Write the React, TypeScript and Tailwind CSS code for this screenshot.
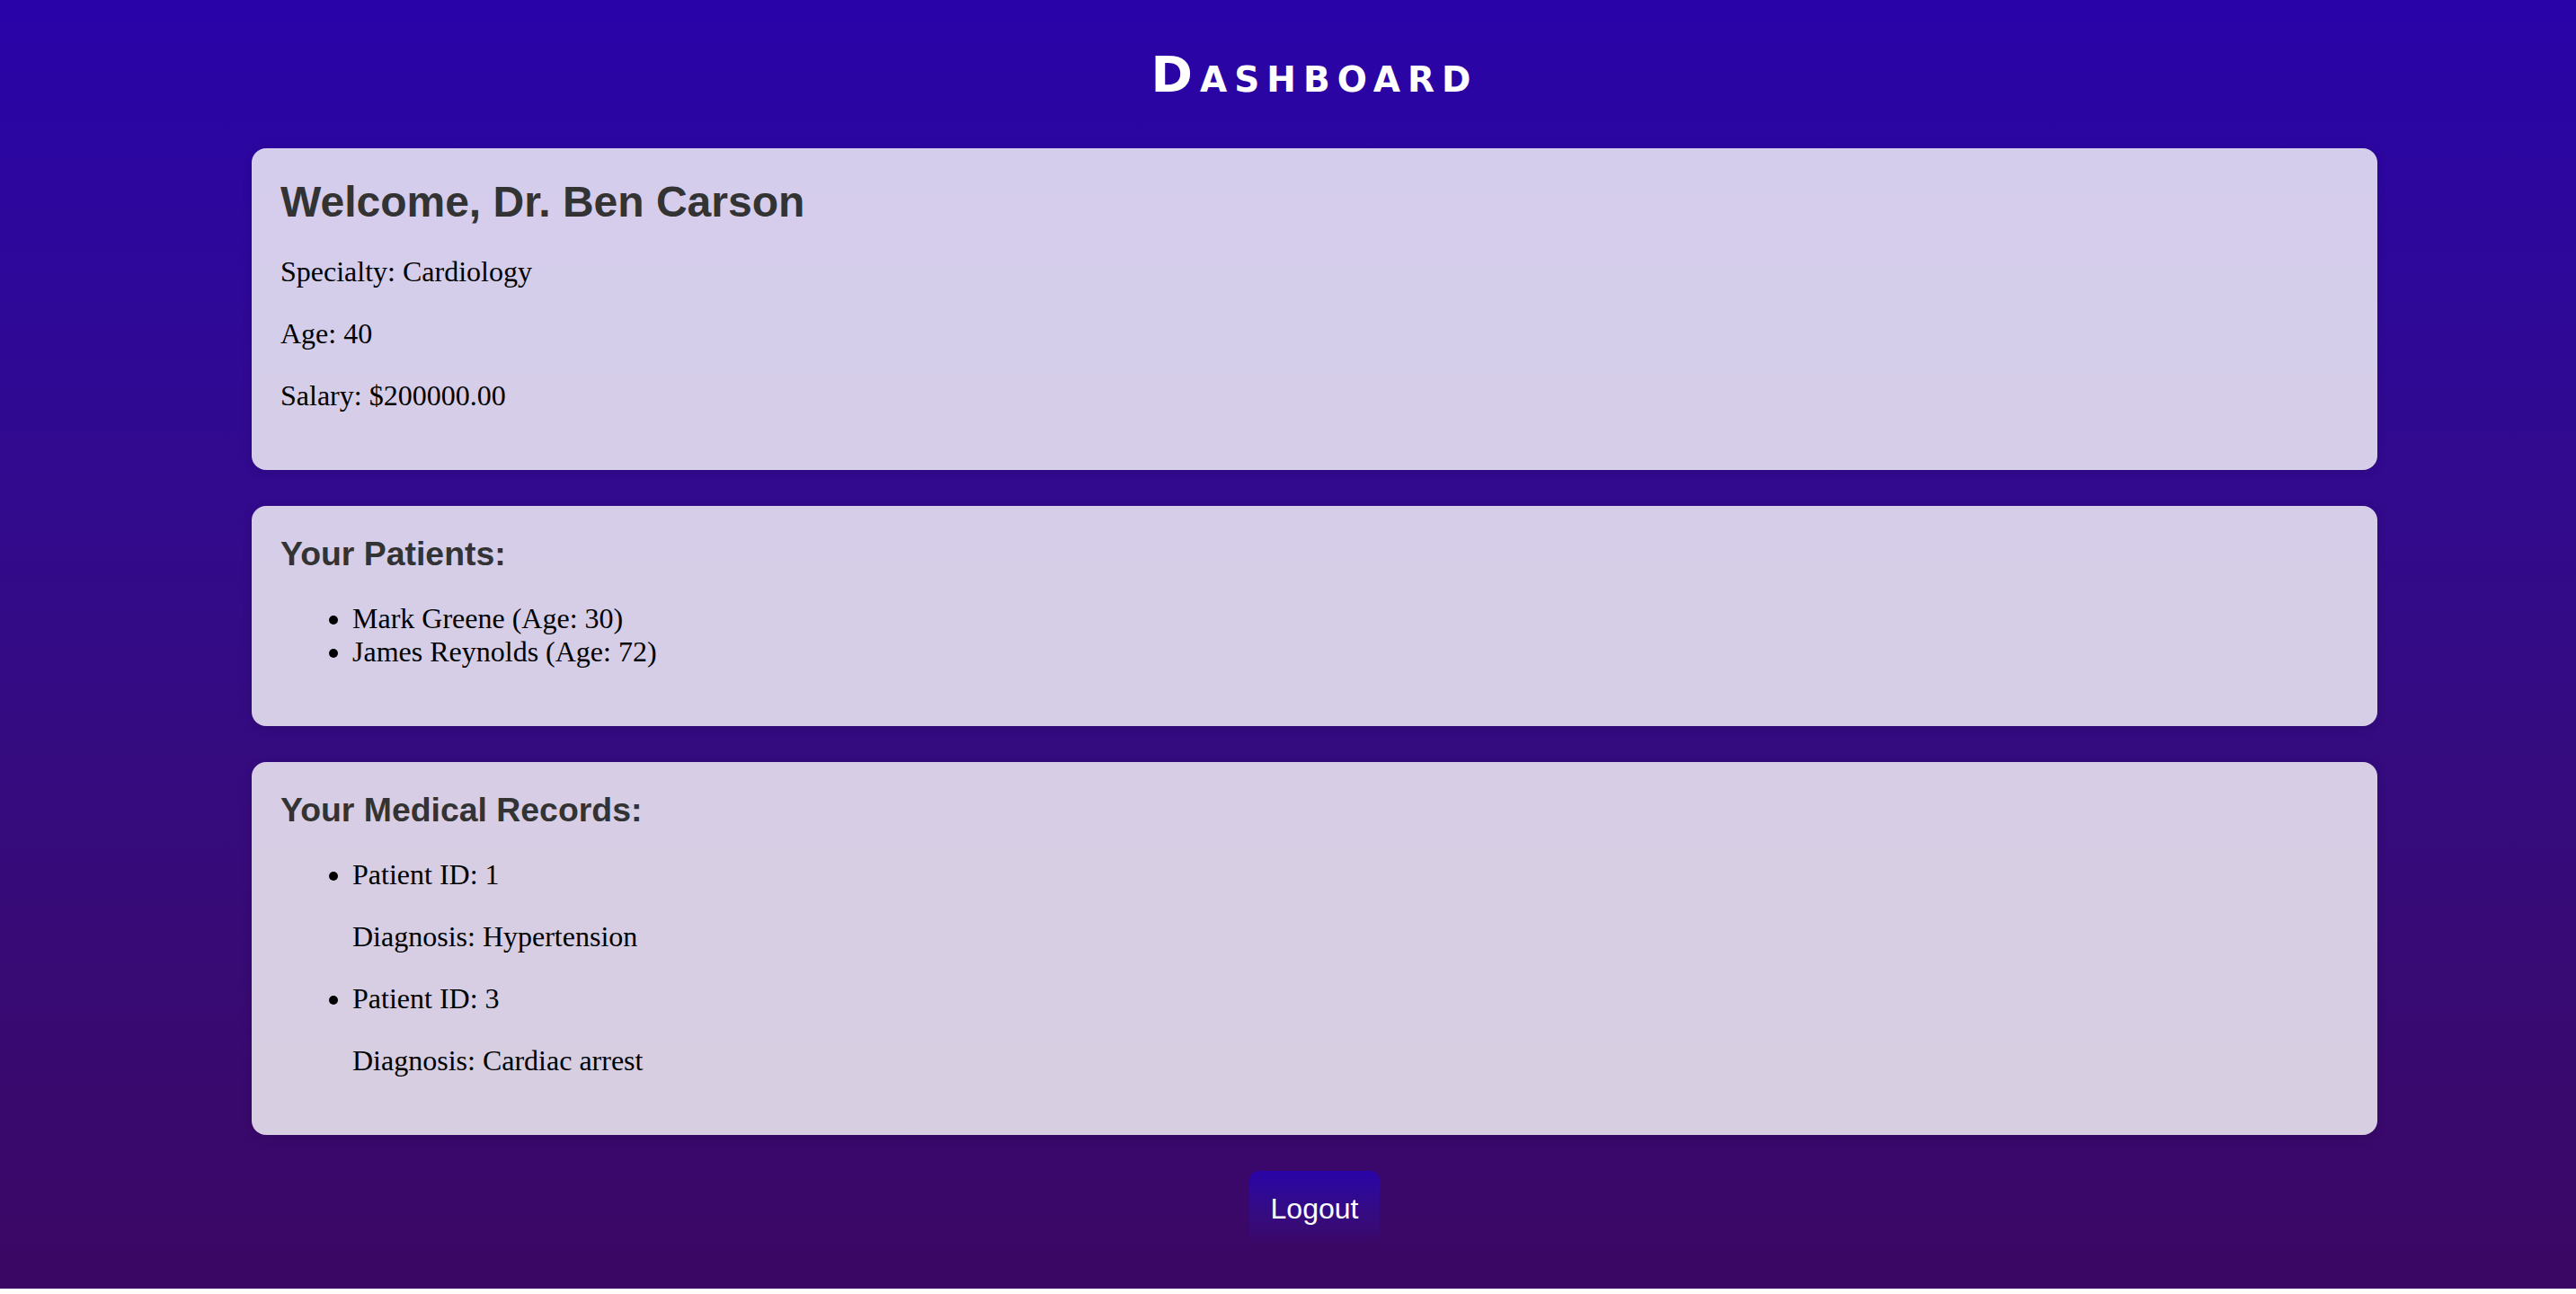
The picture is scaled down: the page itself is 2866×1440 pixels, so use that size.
const patients = [
  { name: 'Mark Greene', age: 30 },
  { name: 'James Reynolds', age: 72 },
];

const records = [
  { patientId: 1, diagnosis: 'Hypertension' },
  { patientId: 3, diagnosis: 'Cardiac arrest' },
];

function Card({ children }: { children: React.ReactNode }) {
  return (
    <div className="rounded-[16px] bg-white/80 p-8 shadow-[0_2px_12px_rgba(0,0,0,0.12)]">
      {children}
    </div>
  );
}

function App() {
  return (
    <div className="h-[1434px] bg-linear-to-b from-[#2903a8] to-[#3b0764] pl-[280px] pr-[221px] pt-[50px] font-['Liberation_Serif','Times_New_Roman',serif] text-[32px] leading-[normal] text-black">
      <h1 className="mb-[50px] h-[65px] text-center font-['DejaVu_Sans',sans-serif] text-[56px] font-bold leading-[65px] tracking-[8px] text-white [font-variant:small-caps]">
        Dashboard
      </h1>

      <div className="flex flex-col gap-[40px]">
        {/* doctor info */}
        <Card>
          <h2 className="mb-8 font-['Liberation_Sans',Arial,sans-serif] text-[48px] font-bold leading-[normal] text-[#333]">
            Welcome, Dr. Ben Carson
          </h2>
          <p className="my-8">Specialty: Cardiology</p>
          <p className="my-8">Age: 40</p>
          <p className="my-8">Salary: $200000.00</p>
        </Card>

        {/* patients */}
        <Card>
          <h3 className="mb-8 font-['Liberation_Sans',Arial,sans-serif] text-[37.4px] font-bold leading-[normal] text-[#333]">
            Your Patients:
          </h3>
          <ul className="my-8 list-disc pl-[80px]">
            {patients.map((p) => (
              <li key={p.name}>
                {p.name} (Age: {p.age})
              </li>
            ))}
          </ul>
        </Card>

        {/* records */}
        <Card>
          <h3 className="mb-8 font-['Liberation_Sans',Arial,sans-serif] text-[37.4px] font-bold leading-[normal] text-[#333]">
            Your Medical Records:
          </h3>
          <ul className="my-8 list-disc pl-[80px]">
            {records.map((r) => (
              <li key={r.patientId}>
                <p className="my-8">Patient ID: {r.patientId}</p>
                <p className="my-8">Diagnosis: {r.diagnosis}</p>
              </li>
            ))}
          </ul>
        </Card>
      </div>

      <div className="mt-[40px] flex justify-center">
        <button className="rounded-[10px] bg-linear-to-b from-[#2903a8] to-[#3b0764] px-6 py-6 font-['Liberation_Sans',Arial,sans-serif] text-[32px] leading-[normal] text-white">
          Logout
        </button>
      </div>
    </div>
  );
}

export default App;
